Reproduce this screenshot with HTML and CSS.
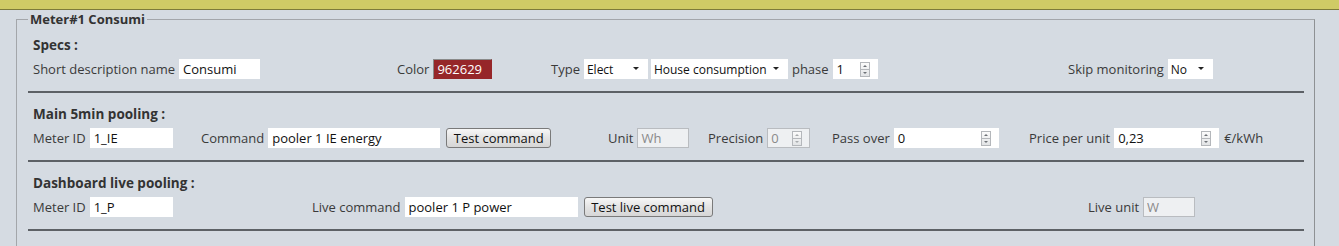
FILE: index.html
```html
<!DOCTYPE html>
<html lang="en">
<head>
    <meta charset="UTF-8">
    <title>Meter#1 Consumi</title>
    <link rel="stylesheet" href="styles.css">
</head>
<body>
    <div class="topbar"></div>
    <fieldset class="meter">
        <legend>Meter#1 Consumi</legend>

        <div class="block">
            <h3>Specs :</h3>
            <div class="row">
                <div class="field w-name">
                    <label>Short description name</label>
                    <input class="txt" style="width:81px" value="Consumi">
                </div>
                <div class="field w-color">
                    <label>Color</label>
                    <input class="txt color" style="width:59px" value="962629">
                </div>
                <div class="field w-type">
                    <label>Type</label>
                    <span class="sel" style="width:64px">Elect</span>
                    <span class="sel" style="width:137px">House consumption</span>
                    <label class="after">phase</label>
                    <span class="spin" style="width:45px"><span class="val">1</span><span class="arrows"></span></span>
                </div>
                <div class="field">
                    <label>Skip monitoring</label>
                    <span class="sel" style="width:45px">No</span>
                </div>
            </div>
            <hr>
        </div>

        <div class="block">
            <h3>Main 5min pooling :</h3>
            <div class="row">
                <div class="field w-meter">
                    <label>Meter ID</label>
                    <input class="txt" style="width:83px" value="1_IE">
                </div>
                <div class="field w-cmd">
                    <label>Command</label>
                    <input class="txt" style="width:172px" value="pooler 1 IE energy">
                    <button style="width:105px">Test command</button>
                </div>
                <div class="field w-unit">
                    <label>Unit</label>
                    <input class="txt off" style="width:52px" value="Wh" disabled>
                </div>
                <div class="field w-prec">
                    <label>Precision</label>
                    <span class="spin off" style="width:43px"><span class="val">0</span><span class="arrows"></span></span>
                </div>
                <div class="field w-pass">
                    <label>Pass over</label>
                    <span class="spin" style="width:105px"><span class="val">0</span><span class="arrows"></span></span>
                </div>
                <div class="field">
                    <label>Price per unit</label>
                    <span class="spin" style="width:105px"><span class="val">0,23</span><span class="arrows"></span></span>
                    <label class="after">&euro;/kWh</label>
                </div>
            </div>
            <hr>
        </div>

        <div class="block">
            <h3>Dashboard live pooling :</h3>
            <div class="row">
                <div class="field w-live-meter">
                    <label>Meter ID</label>
                    <input class="txt" style="width:83px" value="1_P">
                </div>
                <div class="field w-live-cmd">
                    <label>Live command</label>
                    <input class="txt" style="width:173px" value="pooler 1 P power">
                    <button style="width:129px">Test live command</button>
                </div>
                <div class="field">
                    <label>Live unit</label>
                    <input class="txt off" style="width:52px" value="W" disabled>
                </div>
            </div>
            <hr>
        </div>
    </fieldset>
</body>
</html>
```

FILE: styles.css
```css
body {
    margin: 0;
    background-color: #d5dbe2;
    font-family: "Open Sans", "Noto Sans", sans-serif;
    font-size: 13px;
    color: #3a3a3a;
}
.topbar {
    height: 9px;
    background-color: #cfcb66;
    border-bottom: 1px solid #7d7b3a;
}
.meter {
    margin: 2px 24px 0 16px;
    padding: 0 10px 10px 11px;
    border: 1px solid #a3a6aa;
    border-right-color: #8e9194;
    min-height: 240px;
}
.meter legend {
    padding: 0 2px;
    margin-left: 0;
    font-weight: bold;
    font-size: 13px;
    color: #333;
    line-height: 15px;
}
.block h3 {
    margin: 11px 0 0 5px;
    font-size: 13.5px;
    font-weight: bold;
    color: #333;
    line-height: 20px;
}
.block:first-of-type h3 {
    margin-top: 8px;
}
.row {
    display: flex;
    align-items: center;
    height: 20px;
    margin-top: 4px;
    padding-left: 5px;
}
.field {
    display: flex;
    align-items: center;
    gap: 4px;
    flex: none;
}
.w-name { width: 364px; }
.w-color { width: 154px; }
.w-type { width: 517px; }
.w-meter { width: 168px; }
.w-cmd { width: 407px; }
.w-unit { width: 100px; }
.w-prec { width: 124px; }
.w-pass { width: 197px; }
.w-live-meter { width: 279px; }
.w-live-cmd { width: 776px; }
label {
    white-space: nowrap;
}
label.after {
    margin-left: 1px;
}
.txt {
    box-sizing: border-box;
    height: 20px;
    border: 1px solid #fff;
    background-color: #fff;
    padding: 0 3px;
    font-family: inherit;
    font-size: 13px;
    color: #111;
    outline: none;
}
.txt.color {
    background-color: #962629;
    border: 1px solid #962629;
    border-top-color: #8a8a8a;
    border-left-color: #8a8a8a;
    color: #fff;
}
.txt.off {
    background-color: #eef0f2;
    border: 1px solid #b9bcc0;
    color: #8a8a8a;
}
.sel {
    box-sizing: border-box;
    display: inline-flex;
    align-items: center;
    height: 20px;
    padding-left: 3px;
    background-color: #fff;
    color: #111;
    font-size: 12px;
    white-space: nowrap;
    position: relative;
    margin-right: -1px;
}
.sel::after {
    content: "";
    position: absolute;
    right: 9px;
    top: 8px;
    border-left: 3px solid transparent;
    border-right: 3px solid transparent;
    border-top: 3px solid #222;
}
.spin {
    box-sizing: border-box;
    display: inline-flex;
    align-items: center;
    justify-content: space-between;
    height: 20px;
    padding: 0 8px 0 4px;
    background-color: #fff;
    color: #111;
}
.spin.off {
    background-color: #eef0f2;
    border: 1px solid #b9bcc0;
    padding: 0 7px 0 3px;
    color: #8a8a8a;
}
.arrows {
    box-sizing: border-box;
    width: 10px;
    height: 15px;
    border: 1px solid #b4b7bb;
    background:
        linear-gradient(#b4b7bb, #b4b7bb) center / 100% 1px no-repeat,
        linear-gradient(#fbfbfb, #e2e4e6);
    position: relative;
}
.arrows::before,
.arrows::after {
    content: "";
    position: absolute;
    left: 2px;
    border-left: 2px solid transparent;
    border-right: 2px solid transparent;
}
.arrows::before {
    top: 2px;
    border-bottom: 2px solid #6d7176;
}
.arrows::after {
    bottom: 2px;
    border-top: 2px solid #6d7176;
}
.spin.off .arrows::before { border-bottom-color: #a8abae; }
.spin.off .arrows::after { border-top-color: #a8abae; }
button {
    box-sizing: border-box;
    height: 20px;
    margin-left: 2px;
    padding: 0;
    border: 1px solid #7a7a7a;
    border-radius: 3px;
    background: linear-gradient(#f7f7f7, #e3e3e3 50%, #d6d6d6);
    font-family: inherit;
    font-size: 13px;
    color: #111;
    white-space: nowrap;
}
hr {
    height: 0;
    margin: 12px 0 0 0;
    border: none;
    border-top: 2px solid #5d6166;
}
```
